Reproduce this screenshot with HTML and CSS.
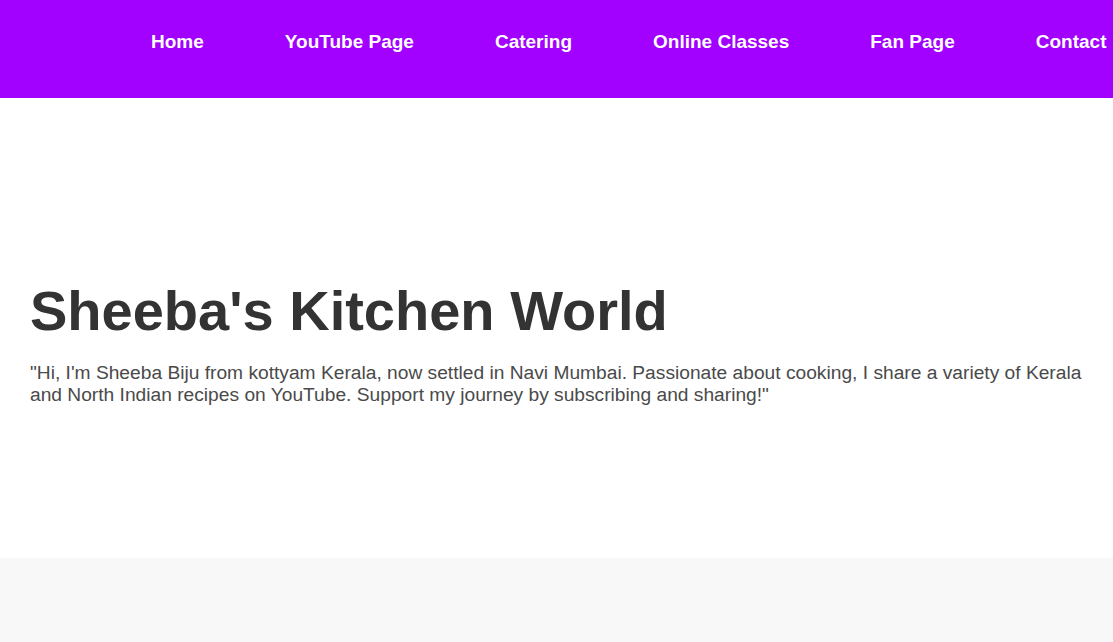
FILE: index.html
```html
<!DOCTYPE html>
<html lang="en">
<head>
<meta charset="utf-8">
<title>Sheeba's Kitchen World</title>
<link rel="stylesheet" href="styles.css">
</head>
<body>
<header class="site-header">
  <nav class="main-nav">
    <ul class="menu">
      <li><a href="#">Home</a></li>
      <li><a href="#">YouTube Page</a></li>
      <li><a href="#">Catering</a></li>
      <li><a href="#">Online Classes</a></li>
      <li><a href="#">Fan Page</a></li>
      <li><a href="#">Contact</a></li>
    </ul>
  </nav>
</header>
<section class="hero">
  <h1 class="hero-title">Sheeba's Kitchen World</h1>
  <p class="hero-text">"Hi, I'm Sheeba Biju from kottyam Kerala, now settled in Navi Mumbai. Passionate about cooking, I share a variety of Kerala and North Indian recipes on YouTube. Support my journey by subscribing and sharing!"</p>
</section>
<section class="below"></section>
</body>
</html>
```

FILE: styles.css
```css
html, body {
  margin: 0;
  padding: 0;
  overflow-x: hidden;
}
body {
  font-family: "Liberation Sans", Arial, sans-serif;
  background: #ffffff;
}
.site-header {
  background: #a200ff;
  height: 98px;
  box-sizing: border-box;
  padding-top: 31px;
  overflow: hidden;
}
.menu {
  list-style: none;
  margin: 0;
  padding: 0 0 0 151px;
  display: flex;
  gap: 81px;
  white-space: nowrap;
}
.menu a {
  color: #ffffff;
  text-decoration: none;
  font-weight: bold;
  font-size: 19px;
}
.hero {
  height: 460px;
  box-sizing: border-box;
  padding: 180px 20px 0 30px;
}
.hero-title {
  margin: 0 0 19px;
  font-size: 56px;
  font-weight: bold;
  color: #333333;
  line-height: normal;
}
.hero-text {
  margin: 0;
  font-size: 19.2px;
  color: #4a4a4a;
  line-height: normal;
}
.below {
  background: #f8f8f8;
  height: 84px;
}
```
